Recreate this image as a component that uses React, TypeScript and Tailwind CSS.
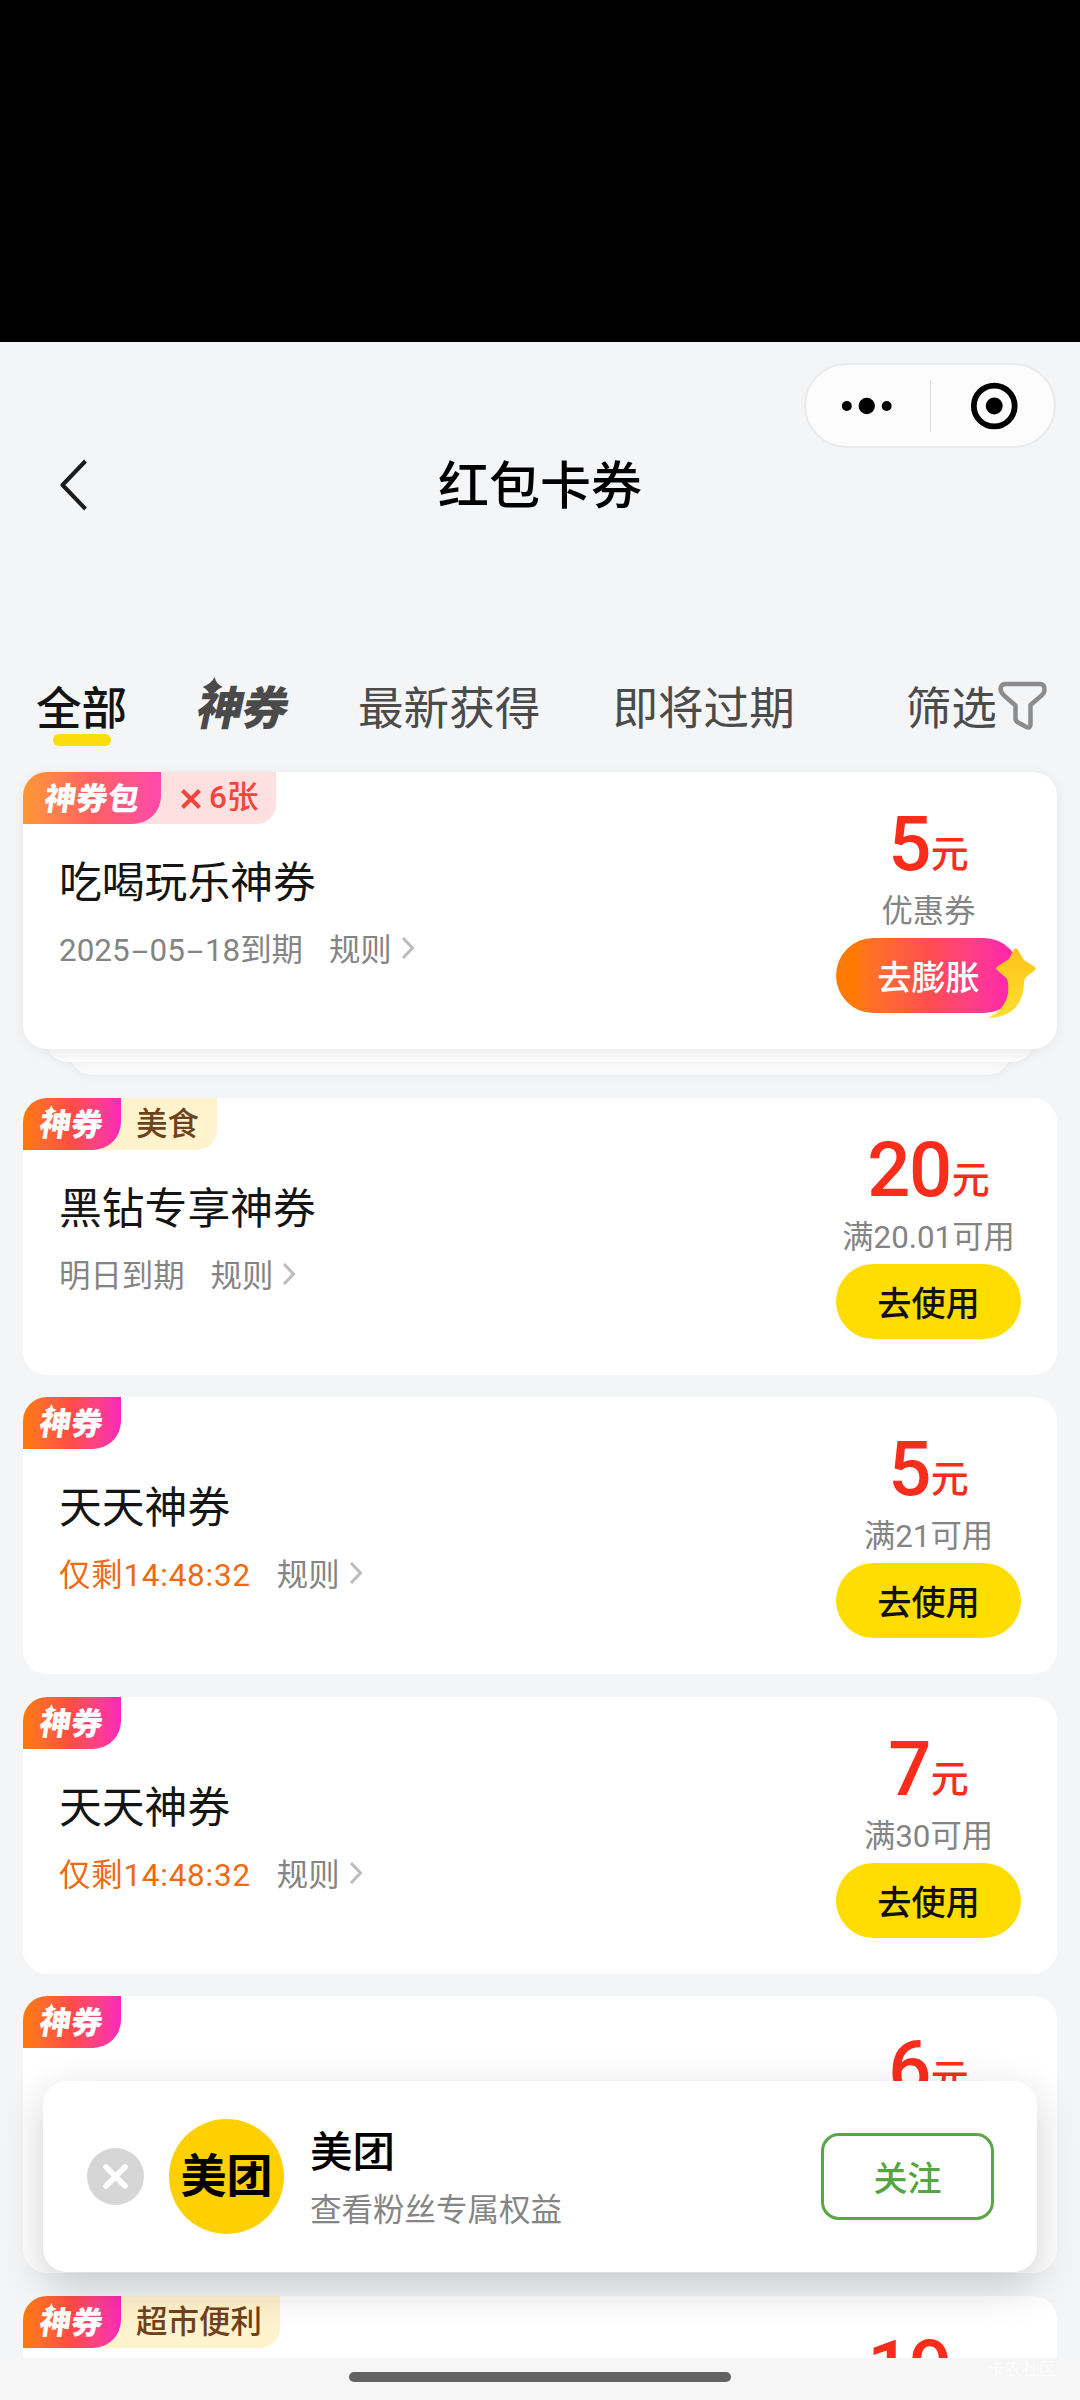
import { Fragment } from "react";
import clsx from "clsx";

type Coupon = {
  id: number;
  title: string;
  amount: string;
  condition: string;
  expire: string;
  urgent?: boolean;
  category?: string;
  count?: number;
};

const coupons: Coupon[] = [
  { id: 1, title: "吃喝玩乐神券", amount: "5", condition: "优惠券", expire: "2025-05-18到期", count: 6 },
  { id: 2, title: "黑钻专享神券", amount: "20", condition: "满20.01可用", expire: "明日到期", category: "美食" },
  { id: 3, title: "天天神券", amount: "5", condition: "满21可用", expire: "仅剩14:48:32", urgent: true },
  { id: 4, title: "天天神券", amount: "7", condition: "满30可用", expire: "仅剩14:48:32", urgent: true },
  { id: 5, title: "", amount: "6", condition: "", expire: "" },
  { id: 6, title: "", amount: "19", condition: "", expire: "", category: "超市便利" },
];

const StatusCapsule = () => (
  <div className="flex h-[85px] w-[252px] items-center rounded-full border-2 border-[#e9eaeb] bg-[#fcfcfc]">
    <svg className="h-full flex-1" viewBox="0 0 124 81">
      <circle cx="41" cy="41" r="5" />
      <circle cx="61" cy="41" r="8.2" />
      <circle cx="81" cy="41" r="5" />
    </svg>
    <div className="h-[52px] w-px bg-[#dcdcdc]" />
    <svg className="h-full flex-1" viewBox="0 0 124 81">
      <circle cx="63.500" cy="41" r="20.500" fill="none" stroke="#000" strokeWidth="5.800" />
      <circle cx="63.500" cy="41" r="8.500" />
    </svg>
  </div>
);

const Header = () => (
  <header className="h-[310px] pt-[21px]">
    <div className="flex justify-end pr-[24px]">
      <StatusCapsule />
    </div>
    <div className="grid h-[73px] grid-cols-[1fr_auto_1fr] items-center">
      <svg className="-mt-[2px] ml-[58px]" width="32" height="54" viewBox="0 0 32 54" fill="none" stroke="#1c1c1c" strokeWidth="4">
        <path d="M27.500 3 L4.500 27 L27.500 51" strokeLinejoin="round" />
      </svg>
      <h1 className="pt-[2px] text-[51px] leading-[73px] font-medium text-black">红包卡券</h1>
    </div>
  </header>
);

const Tabs = () => (
  <nav className="flex h-[120px] items-start pl-9 text-[45.600px] leading-[64px] whitespace-nowrap text-[#4b4b4b]">
    <div className="flex w-[91px] flex-col items-center pt-[26px] font-medium text-[#141414]">
      全部
      <span className="-mt-[8px] h-3 w-[58px] rounded-full bg-[#fbdc0c]" />
    </div>
    <div className="relative mt-[25px] ml-[71px] w-[92px] -skew-x-12 text-[46px] font-black tracking-[-1px] text-[#4a4a4a]">
      神券
      <svg className="absolute top-0 left-0" width="20" height="20" viewBox="0 0 16 16" fill="#4a4a4a">
        <path d="M8 0 Q9.500 5 16 8 Q10.500 10.500 8 16 Q5.500 10.500 0 8 Q6.500 5 8 0Z" />
      </svg>
    </div>
    <div className="mt-[26px] ml-[68px]">最新获得</div>
    <div className="mt-[26px] ml-[72px]">即将过期</div>
    <div className="mt-[26px] ml-[111px]">筛选</div>
    <svg className="mt-[29px] ml-px" width="50" height="50" viewBox="0 0 50 50" fill="none" stroke="#8c8c8c" strokeWidth="4.500" strokeLinejoin="round">
      <path d="M7 3 H42 Q46.500 3 46.500 8.500 Q46.500 12 43.500 14.500 L32.500 24 V43 Q32.500 48 28.500 46 L20 41.500 Q17.500 40 17.500 37.500 V24.500 L6 14.500 Q2.500 11 2.500 7.500 Q3.500 3 7 3Z" />
    </svg>
  </nav>
);

const Tag = ({ coupon }: { coupon: Coupon }) => {
  const isPack = coupon.count !== undefined;
  return (
    <div
      className={clsx(
        "flex h-[52px] w-fit rounded-tl-[24px] rounded-br-[20px] text-[31.500px] leading-[54px]",
        isPack && "bg-[#ffe0e1]",
        coupon.category && "bg-[#fff3cd]"
      )}
    >
      <div
        className={clsx(
          "flex justify-center rounded-tl-[24px] rounded-br-[28px] font-black text-white",
          isPack
            ? "w-[138px] bg-linear-to-r from-[#ff9830] via-[#ff6060] to-[#ff48ac]"
            : "w-[98px] bg-linear-to-r from-[#ff7a00] via-[#ff4b46] to-[#fb26b8]"
        )}
      >
        <span className="relative -skew-x-8 pt-px">
          {isPack ? "神券包" : "神券"}
          {!isPack && (
            <svg className="absolute top-[7px] left-[3px]" width="12" height="12" viewBox="0 0 16 16" fill="#fff">
              <path d="M8 0 L10.500 5.500 L16 8 L10.500 10.500 L8 16 L5.500 10.500 L0 8 L5.500 5.500Z" />
            </svg>
          )}
        </span>
      </div>
      {isPack && (
        <div className="flex w-[115px] items-center pl-[20px] font-medium text-[#f2463d]">
          <svg className="mt-[2px] mr-[8px]" width="20" height="20" viewBox="0 0 20 20" stroke="#f2463d" strokeWidth="4">
            <path d="M1.500 1.500 L18.500 18.500 M18.500 1.500 L1.500 18.500" />
          </svg>
          <span>{coupon.count}张</span>
        </div>
      )}
      {coupon.category && <div className="pr-[18px] pl-[15px] font-medium text-[#70421b]">{coupon.category}</div>}
    </div>
  );
};

const Expire = ({ text }: { text: string }) => (
  <>
    {text.split("-").map((part, i) => (
      <Fragment key={i}>
        {i > 0 && <span className="inline-block w-[20px] scale-x-[1.900] text-center">-</span>}
        {part}
      </Fragment>
    ))}
  </>
);

const CouponCard = ({ coupon }: { coupon: Coupon }) => {
  const isPack = coupon.count !== undefined;
  return (
    <article
      className={clsx(
        "relative z-10 flex h-[277px] justify-between rounded-[24px] bg-white",
        isPack && "shadow-[0_2px_14px_rgba(0,0,0,0.06)]"
      )}
    >
      <div>
        <Tag coupon={coupon} />
        <h2 className="mt-[28px] h-[62px] pl-[36px] text-[42.800px] leading-[62px] text-[#151515]">{coupon.title}</h2>
        {coupon.expire && (
          <div className="mt-[13px] flex items-center pl-[36px] text-[31.400px] leading-[48px] text-[#848484]">
            <span className={clsx(coupon.urgent && "tracking-[0.8px] text-[#ef6a10]")}>
              <Expire text={coupon.expire} />
            </span>
            <span className="ml-[26px]">规则</span>
            <svg className="mb-[6px] ml-[8px]" width="16" height="24" viewBox="0 0 16 24" fill="none" stroke="#bcbcbc" strokeWidth="3">
              <path d="M3 2 L12.500 12 L3 22" />
            </svg>
          </div>
        )}
      </div>
      <div className="mr-[36px] flex w-[185px] flex-col items-center">
        <div className="mt-[27px] flex h-[90px] items-baseline text-[#f92d1c]">
          <span className="text-[76px] leading-[90px] font-medium tracking-[-1.500px]">{coupon.amount}</span>
          <span className="relative -top-[3px] ml-px text-[38px] font-medium">元</span>
        </div>
        <div className="h-[49px] text-[31.300px] leading-[45px] whitespace-nowrap text-[#848484]">{coupon.condition}</div>
        <button
          className={clsx(
            "relative h-[75px] w-[185px] shrink-0 rounded-full pt-[3px] text-[34.200px] leading-[75px] font-medium",
            isPack ? "bg-linear-to-r from-[#ff7a00] from-10% via-[#ff4d4d] via-50% to-[#ff2aa6] to-90% text-white" : "bg-[#ffdd00] text-[#111]"
          )}
        >
          {isPack ? "去膨胀" : "去使用"}
          {isPack && (
            <svg className="absolute top-[8px] left-[150px]" width="52" height="74" viewBox="0 0 52 74">
              <defs>
                <linearGradient id="boost" x1="0" y1="0" x2="0" y2="1">
                  <stop offset="0" stopColor="#ffc21a" />
                  <stop offset="1" stopColor="#ffe02e" />
                </linearGradient>
              </defs>
              <path
                fill="url(#boost)"
                d="M28 3 Q30 1 32 4 L38 14 L49 21 Q51 23 48 25 L40 31 Q38 33 38 38 Q36 71 2 72 Q25 60 22 37 Q22 33 18 30 L11 24 Q9 22 12 20 L23 13Z"
              />
            </svg>
          )}
        </button>
      </div>
    </article>
  );
};

const FollowBar = () => (
  <section className="absolute bottom-[128px] left-[43px] z-20 flex h-[191px] w-[994px] items-center rounded-[24px] bg-white pr-[43px] pl-[44px] shadow-[0_14px_44px_rgba(0,0,0,0.19)]">
    <svg width="57" height="57" viewBox="0 0 57 57">
      <circle cx="28.500" cy="28.500" r="28.500" fill="#d6d6d6" />
      <path d="M19 19 L38 38 M38 19 L19 38" stroke="#fff" strokeWidth="5.500" strokeLinecap="round" />
    </svg>
    <div className="ml-[25px] flex h-[115px] w-[115px] items-center justify-center rounded-full bg-[#ffd000] text-[46px] font-bold text-black">
      美团
    </div>
    <div className="ml-[26px] flex-1 pt-[6px]">
      <div className="text-[42.500px] leading-[62px] font-medium text-black">美团</div>
      <div className="text-[31.500px] leading-[54px] text-[#858585]">查看粉丝专属权益</div>
    </div>
    <button className="h-[87px] w-[173px] rounded-[18px] border-[3px] border-[#5ba548] pt-[6px] text-[34px] font-medium text-[#56a541]">
      关注
    </button>
  </section>
);

export default function App() {
  return (
    <div className="relative flex h-[2400px] w-[1080px] flex-col overflow-hidden bg-[#f4f5f7] font-[Roboto,'Noto_Sans_CJK_SC',sans-serif]">
      <div className="h-[342px] shrink-0 bg-black" />
      <Header />
      <Tabs />
      <main className="-mt-5 flex h-[1606px] shrink-0 flex-col gap-[22.500px] overflow-hidden px-[23px] pt-5">
        {coupons.map((coupon) => (
          <div key={coupon.id} className="shrink-0">
            <CouponCard coupon={coupon} />
            {/* edges of the stacked cards under a coupon pack */}
            {coupon.count !== undefined && (
              <>
                <div className="relative z-[5] mx-[22px] -mt-[37px] h-[50px] rounded-b-[24px] bg-linear-to-b from-[#f6f6f7] from-70% to-[#fdfdfd] shadow-[0_2px_10px_rgba(0,0,0,0.05)]" />
                <div className="mx-[46px] -mt-[37px] h-[50px] rounded-b-[24px] bg-[#fbfbfb] shadow-[0_2px_10px_rgba(0,0,0,0.05)]" />
              </>
            )}
          </div>
        ))}
      </main>
      <footer className="relative flex h-[42px] justify-center bg-[#f6f6f6] pt-[14px]">
        <div className="h-[10px] w-[382px] rounded-full bg-[#636363]" />
        <span className="absolute top-[2px] right-[24px] text-[17px] leading-[18px] text-[#fcfcfc]">卡农社区</span>
      </footer>
      <FollowBar />
    </div>
  );
}
